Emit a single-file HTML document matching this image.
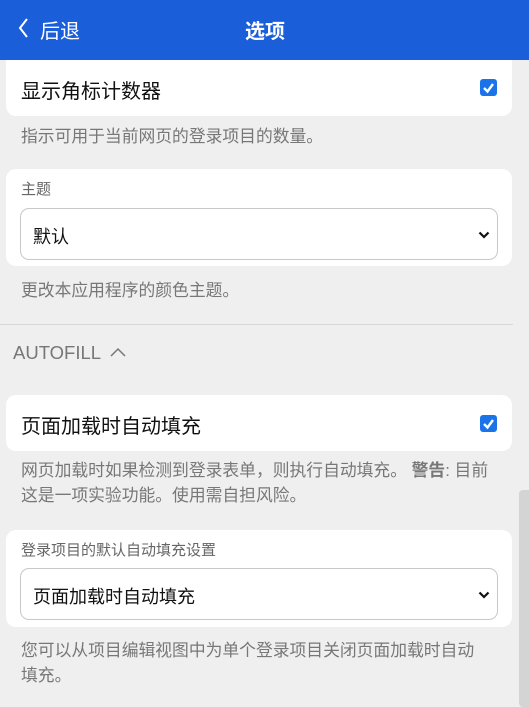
<!DOCTYPE html>
<html><head><meta charset="utf-8"><style>
*{margin:0;padding:0;box-sizing:border-box}
body{width:529px;height:707px;overflow:hidden;background:#efefef;font-family:"Liberation Sans","Noto Sans CJK SC",sans-serif;position:relative}
.hdr{position:absolute;left:0;top:0;width:529px;height:60px;background:#1b5ed9;color:#fff}
.abs{position:absolute;white-space:nowrap}
.card{position:absolute;left:6px;width:506px;background:#fff;border-radius:10px}
.t20{font-size:20px;color:#111}
.desc{font-size:16.8px;color:#777;line-height:25px}
.cb{position:absolute;width:17px;height:17px;background:#1a73e8;border-radius:3px}
.sel{position:absolute;left:14px;width:478px;height:52px;border:1px solid #c8c8c8;border-radius:9px}
</style></head><body>
<div class="hdr">
<svg class="abs" style="left:17px;top:17px" width="14" height="22" viewBox="0 0 14 22"><path d="M10 2 L3 11 L10 20" stroke="#fff" stroke-width="2" fill="none"/></svg>
<div class="abs" style="left:40px;top:15px;font-size:20px">后退</div>
<div class="abs" style="left:245px;top:15px;font-size:20px;font-weight:bold">选项</div>
</div>
<div class="card" style="top:60px;height:56px;border-radius:0 0 10px 10px">
<div class="abs t20" style="left:15px;top:15px">显示角标计数器</div>
<div class="cb" style="left:474px;top:19px"><svg width="17" height="17"><path d="M4 9 L7.5 12.5 L13 5" stroke="#fff" stroke-width="2.4" fill="none"/></svg></div>
</div>
<div class="abs desc" style="left:21px;top:124px">指示可用于当前网页的登录项目的数量。</div>
<div class="card" style="top:169px;height:97px">
<div class="abs" style="left:15px;top:9px;font-size:15px;color:#666">主题</div>
<div class="sel" style="top:39px"><div class="abs" style="left:12px;top:14px;font-size:18px;color:#111">默认</div>
<svg class="abs" style="left:457px;top:21px" width="12" height="10"><path d="M1.5 2.5 L6 7 L10.5 2.5" stroke="#111" stroke-width="2.2" fill="none"/></svg></div>
</div>
<div class="abs desc" style="left:21px;top:278px">更改本应用程序的颜色主题。</div>
<div class="abs" style="left:0;top:324px;width:513px;height:1px;background:#d8d8d8"></div>
<div class="abs" style="left:13px;top:342px;font-size:18.5px;color:#777">AUTOFILL</div>
<svg class="abs" style="left:109px;top:346px" width="18" height="12"><path d="M2 10 L9 3 L16 10" stroke="#777" stroke-width="1.5" fill="none"/></svg>
<div class="card" style="top:395px;height:56px">
<div class="abs t20" style="left:15px;top:15px">页面加载时自动填充</div>
<div class="cb" style="left:474px;top:20px"><svg width="17" height="17"><path d="M4 9 L7.5 12.5 L13 5" stroke="#fff" stroke-width="2.4" fill="none"/></svg></div>
</div>
<div class="abs desc" style="left:21px;top:458px">网页加载时如果检测到登录表单，则执行自动填充。 <b>警告</b>: 目前<br>这是一项实验功能。使用需自担风险。</div>
<div class="card" style="top:530px;height:97px">
<div class="abs" style="left:15px;top:9px;font-size:15px;color:#666">登录项目的默认自动填充设置</div>
<div class="sel" style="top:38px"><div class="abs" style="left:12px;top:14px;font-size:18px;color:#111">页面加载时自动填充</div>
<svg class="abs" style="left:457px;top:21px" width="12" height="10"><path d="M1.5 2.5 L6 7 L10.5 2.5" stroke="#111" stroke-width="2.2" fill="none"/></svg></div>
</div>
<div class="abs desc" style="left:21px;top:638px">您可以从项目编辑视图中为单个登录项目关闭页面加载时自动<br>填充。</div>
<div class="abs" style="left:519px;top:490px;width:10px;height:217px;background:#d4d4d4;border-radius:4px 0 0 4px"></div>
</body></html>
